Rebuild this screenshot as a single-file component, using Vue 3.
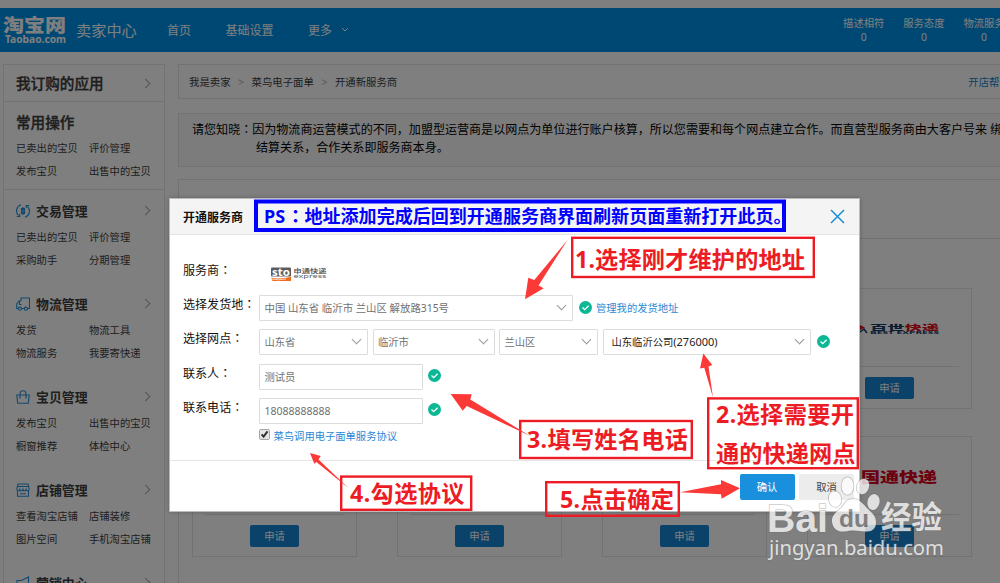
<template>
  <div class="page">
    <header class="topbar">
      <svg class="logo" width="70" height="44" viewBox="0 0 70 44">
        <text class="logo-cn" transform="translate(3 24) scale(1 0.86)" textLength="63">淘宝网</text>
        <text class="logo-en" x="5" y="35" textLength="61" lengthAdjust="spacingAndGlyphs">Taobao.com</text>
      </svg>
      <span class="center-name">卖家中心</span>
      <nav>
        <a>首页</a>
        <a>基础设置</a>
        <a>更多</a>
        <svg width="8" height="6" viewBox="0 0 8 6"><path d="M1 1l3 3 3-3" /></svg>
      </nav>
      <ul class="scores">
        <li v-for="score in scores" :key="score"><span>{{ score }}</span><span>0</span></li>
      </ul>
    </header>

    <div class="columns">
      <aside class="sidebar">
        <h2 class="apps">我订购的应用 <i class="more"></i></h2>
        <section class="common">
          <h2>常用操作</h2>
          <div class="links">
            <a v-for="link in commonLinks" :key="link">{{ link }}</a>
          </div>
        </section>
        <section v-for="group in groups" :key="group.title" class="group">
          <h3>
            <svg width="14" height="14" viewBox="0 0 14 14"><path v-for="d in group.icon" :key="d" :d="d" /></svg>
            {{ group.title }}
            <i class="more"></i>
          </h3>
          <div class="links">
            <a v-for="link in group.links" :key="link">{{ link }}</a>
          </div>
        </section>
      </aside>

      <main>
        <div class="crumbs">
          <span>我是卖家</span><b>&gt;</b><span>菜鸟电子面单</span><b>&gt;</b><span>开通新服务商</span>
          <a>开店帮助</a>
        </div>
        <div class="notice">
          <p>请您知晓<span class="colon">：</span>因为物流商运营模式的不同，加盟型运营商是以网点为单位进行账户核算，所以您需要和每个网点建立合作。而直营型服务商由大客户号来 绑定</p>
          <p class="second">结算关系，合作关系即服务商本身。</p>
        </div>
        <div class="panel">
          <div class="tabs"></div>
          <div class="cards">
            <div v-for="n in 8" :key="n" class="card">
              <div class="brand">
                <svg v-if="n === 4" width="139" height="76" viewBox="0 0 139 76">
                  <path d="M36 34l9 4.500-9 4.500z" fill="#e0101c" />
                  <path d="M40 43l4-3 3 4" fill="none" stroke="#163a66" stroke-width="1.5" />
                  <text class="best" transform="translate(50 40.500) scale(1 0.42)" textLength="69"><tspan fill="#163a66">百世</tspan><tspan fill="#e0101c">快递</tspan></text>
                  <text class="best-en" transform="translate(50 44.500) scale(1 0.55)" textLength="69" lengthAdjust="spacingAndGlyphs">BEST EXPRESS</text>
                </svg>
                <svg v-if="n === 8" width="139" height="76" viewBox="0 0 139 76">
                  <text class="gto" transform="translate(41 44.500) scale(1 0.74)" textLength="76">国通快递</text>
                </svg>
              </div>
              <button type="button">申请</button>
            </div>
          </div>
        </div>
      </main>
    </div>

    <div class="mask"></div>

    <div class="dialog">
      <div class="dialog-head">
        <strong>开通服务商</strong>
        <svg width="15" height="15" viewBox="0 0 15 15"><path d="M1 1l13 13M14 1L1 14" /></svg>
      </div>
      <div class="dialog-body">
        <div class="row">
          <label>服务商<span class="colon">：</span></label>
          <svg class="sto" width="60" height="20" viewBox="0 0 60 20">
            <rect x="0" y="3.500" width="20" height="9" rx="1" fill="#5c5c60" />
            <path d="M0 13.8q10 1.600 20-1v4.200H1.500z" fill="#f26b1d" />
            <path d="M0 15q8 1.600 15 0" fill="none" stroke="#fff" stroke-width="0.7" />
            <text class="sto-mark" x="1" y="11.500" textLength="18" lengthAdjust="spacingAndGlyphs">sto</text>
            <text class="sto-cn" transform="translate(22.500 9.300) scale(1 0.64)" textLength="33" lengthAdjust="spacingAndGlyphs">申通快递</text>
            <text class="sto-en" transform="translate(22.500 14) scale(1 0.72)" textLength="33" lengthAdjust="spacingAndGlyphs">express</text>
          </svg>
        </div>
        <div class="row">
          <label>选择发货地<span class="colon">：</span></label>
          <div class="field address">中国 山东省 临沂市 兰山区 解放路315号<i class="down"></i></div>
          <i class="ok"><svg width="13" height="13" viewBox="0 0 13 13"><path d="M3.500 6.500l2.200 2.200 3.900-3.900" /></svg></i>
          <a class="manage">管理我的发货地址</a>
        </div>
        <div class="row">
          <label>选择网点<span class="colon">：</span></label>
          <div class="field province">山东省<i class="down"></i></div>
          <div class="field city">临沂市<i class="down"></i></div>
          <div class="field district">兰山区<i class="down"></i></div>
          <div class="field branch">山东临沂公司<span>(276000)</span><i class="down thin"></i></div>
          <i class="ok"><svg width="13" height="13" viewBox="0 0 13 13"><path d="M3.500 6.500l2.200 2.200 3.900-3.900" /></svg></i>
        </div>
        <div class="row">
          <label>联系人<span class="colon">：</span></label>
          <div class="field text">测试员</div>
          <i class="ok wide"><svg width="13" height="13" viewBox="0 0 13 13"><path d="M3.500 6.500l2.200 2.200 3.900-3.900" /></svg></i>
        </div>
        <div class="row">
          <label>联系电话<span class="colon">：</span></label>
          <div class="field text phone">18088888888</div>
          <i class="ok wide"><svg width="13" height="13" viewBox="0 0 13 13"><path d="M3.500 6.500l2.200 2.200 3.900-3.900" /></svg></i>
        </div>
        <div class="agree">
          <svg width="11" height="11" viewBox="0 0 11 11">
            <rect x="0.5" y="0.5" width="10" height="10" rx="1.500" />
            <path d="M2.600 5.300l2 2.300 3.900-5.200" />
          </svg>
          <a>菜鸟调用电子面单服务协议</a>
        </div>
      </div>
      <div class="dialog-foot">
        <button type="button" class="confirm">确认</button>
        <button type="button" class="cancel">取消</button>
      </div>
    </div>

    <!-- hand-drawn tutorial notes over the dialog -->
    <svg class="notes" width="1000" height="583" viewBox="0 0 1000 583">
      <rect class="ps-box" x="256" y="201.500" width="528" height="28.500" />
      <text class="ps-text" x="264" y="223">PS</text>
      <text class="ps-text ps-colon" x="286.500" y="223">：</text>
      <text class="ps-text" x="304.500" y="223" textLength="487">地址添加完成后回到开通服务商界面刷新页面重新打开此页。</text>
      <rect v-for="box in boxes" :key="box.x" class="box" :x="box.x" :y="box.y" :width="box.w" :height="box.h" />
      <polygon v-for="points in arrows" :key="points" class="arrow" :points="points" />
      <text v-for="note in notes" :key="note.text" class="note" :x="note.x" :y="note.y" :textLength="note.w">{{ note.text }}</text>
    </svg>

    <svg class="watermark" width="190" height="100" viewBox="760 470 190 100">
      <g class="wm-shape">
        <ellipse cx="847.500" cy="486" rx="6" ry="8.800" />
        <ellipse cx="863" cy="486.500" rx="6" ry="8" transform="rotate(18 863 486.500)" />
        <ellipse cx="835" cy="499" rx="6.200" ry="8" transform="rotate(-12 835 499)" />
        <ellipse cx="873.500" cy="502" rx="6" ry="8" transform="rotate(12 873.500 502)" />
        <path d="M853 499c-7 0-8 5-12 9-6 5-9.500 8-9 14 1 7 6 10 12 9.500 4-.5 6-1 10-1s7 .8 11 1c7 .4 11-3 11-9.500 0-6-4-9-8-13-5-5-8-10-15-10z" />
      </g>
      <text class="wm-bai" x="767" y="531.500" textLength="61" lengthAdjust="spacingAndGlyphs">Bai</text>
      <text class="wm-du" x="839" y="527" textLength="30" lengthAdjust="spacingAndGlyphs">du</text>
      <text class="wm-cn" x="881" y="528" textLength="61">经验</text>
      <text class="wm-url" x="769" y="554.500" textLength="175" lengthAdjust="spacingAndGlyphs">jingyan.baidu.com</text>
    </svg>
  </div>
</template>

<script setup>
const scores = ["描述相符", "服务态度", "物流服务"];

const commonLinks = ["已卖出的宝贝", "评价管理", "发布宝贝", "出售中的宝贝"];

const groups = [
  {
    title: "交易管理",
    links: ["已卖出的宝贝", "评价管理", "采购助手", "分期管理"],
    icon: [
      "M5 .8a6.400 6.400 0 0 0-2.500 10.700M.8 12.500h3V10",
      "M9 13.200a6.400 6.400 0 0 0 2.500-10.700M13.200 1.500h-3V4",
      "M5.500 4.500h3v5h-3zM7 3v8M5 5.500h4M5 8h4",
    ],
  },
  {
    title: "物流管理",
    links: ["发货", "物流工具", "物流服务", "我要寄快递"],
    icon: [
      "M5 4V1h8.500v10.500H12M5 4H3L.7 7V11.500H2M3.500 4v3.500H5.500M6 11.500h2",
      "M2.300 11.700a1.600 1.600 0 1 0 3.200 0 1.600 1.600 0 1 0-3.200 0M8.300 11.700a1.600 1.600 0 1 0 3.200 0 1.600 1.600 0 1 0-3.200 0",
    ],
  },
  {
    title: "宝贝管理",
    links: ["发布宝贝", "出售中的宝贝", "橱窗推荐", "体检中心"],
    icon: [
      "M.8 5h12.400l-.9 8.300H1.700z",
      "M4 8V4.200C4 2 5.200.8 7 .8s3 1.200 3 3.400V8M3.300 8h1.400M9.300 8h1.400",
    ],
  },
  {
    title: "店铺管理",
    links: ["查看淘宝店铺", "店铺装修", "图片空间", "手机淘宝店铺"],
    icon: [
      "M2 1h10l1.200 5c0 2-2.600 2.300-3.100.5-.6 1.900-2.600 1.900-3.100 0-.6 1.900-2.600 1.900-3.100 0C3.400 8.300.8 8 .8 6z",
      "M1.500 8v5.300h11V8M2 3.500h10M4 10.700h6",
    ],
  },
  {
    title: "营销中心",
    links: [],
    icon: ["M1 4.500h4.500L12.500 1v11L6 9H1zM3 9v4h3V9"],
  },
];

const boxes = [
  { x: 572.2, y: 237.8, w: 241.6, h: 39.2 },
  { x: 708.2, y: 398.4, w: 149.6, h: 69.8 },
  { x: 520.2, y: 421, w: 171.6, h: 37 },
  { x: 341.2, y: 476.6, w: 130, h: 33.2 },
  { x: 546.2, y: 482.2, w: 132.6, h: 33.6 },
];

const notes = [
  { text: "1.选择刚才维护的地址", x: 575, y: 268, w: 230 },
  { text: "2.选择需要开", x: 716, y: 422.5, w: 138 },
  { text: "通的快递网点", x: 716, y: 462, w: 139.5 },
  { text: "3.填写姓名电话", x: 527, y: 448, w: 161 },
  { text: "4.勾选协议", x: 350, y: 501.5, w: 114.5 },
  { text: "5.点击确定", x: 560, y: 508, w: 114 },
];

const arrows = [
  "567.5,240 534.3,280 528.3,277.7 525,299.3 543.7,288.3 538.5,285.5",
  "703.3,353.5 700,368.5 704.3,367.7 713,397.5 708.5,366.5 712.3,365",
  "450.7,394 471.7,394.3 470.3,399.5 530,436 466.7,406 462.7,410.7",
  "310,453 320.7,456 318.5,459.5 348.7,488.3 316.4,462 314.3,463.7",
  "680,492.3 721,484.3 721,480 740,488.3 721.7,498.7 721,494.3",
];
</script>

<style>
body {
  overflow: hidden;
}
</style>

<style scoped>
.page {
  position: relative;
  width: 1000px;
  height: 583px;
  overflow: hidden;
  box-sizing: border-box;
  padding-top: 8px;
  background: #fff;
  color: #3c3c3c;
  font-family: "Noto Sans", "Noto Sans CJK SC", sans-serif;
  font-size: 10.3px;
}

.page *,
.page *::before {
  box-sizing: border-box;
}

h2,
h3,
p,
ul {
  margin: 0;
  padding: 0;
}

button {
  border: 0;
  padding: 0 0 1px;
  border-radius: 2px;
  font-family: inherit;
  font-size: 10.3px;
  color: #fff;
  background: #1a90dc;
}

/* the TC face centres the colon in its cell */
.colon {
  font-family: "Noto Sans CJK TC", sans-serif;
  line-height: 1;
}

.topbar {
  display: flex;
  align-items: center;
  height: 44px;
  background: #0090e8;
  color: #fff;
  white-space: nowrap;
}

.logo {
  flex: none;
  fill: #fff;
}

.logo-cn {
  font: 900 21px "Noto Sans CJK SC", sans-serif;
}

.logo-en {
  font: bold 10px "Noto Sans", sans-serif;
}

.center-name {
  flex: none;
  width: 97px;
  padding: 0 0 2px 6px;
  font-size: 15.2px;
}

nav {
  display: flex;
  flex: none;
  align-items: center;
  width: 666.6px;
  padding-bottom: 1px;
  font-size: 12px;
}

nav a {
  margin-right: 34.5px;
}

nav a:nth-child(3) {
  margin-right: 9px;
}

nav svg {
  fill: none;
  stroke: #fff;
}

.scores {
  display: flex;
  flex: none;
  list-style: none;
}

.scores li {
  display: flex;
  flex-direction: column;
  align-items: center;
  flex: none;
  width: 60.2px;
  line-height: 14px;
}

.columns {
  display: flex;
  padding: 12px 0 0 3px;
  gap: 13px;
}

.sidebar {
  flex: none;
  width: 162px;
  height: 530px;
  border: 1px solid #e4e4e4;
}

.apps {
  display: flex;
  align-items: center;
  justify-content: space-between;
  height: 37px;
  padding: 0 12px 0 12px;
  border-bottom: 1px solid #e4e4e4;
}

.sidebar h2 {
  font-size: 14.6px;
  font-weight: 500;
  line-height: 20px;
  -webkit-text-stroke: 0.35px #3c3c3c;
}

.common {
  height: 88px;
  padding: 10px 0 0 12px;
  border-bottom: 1px solid #e4e4e4;
}

.links {
  display: grid;
  grid-template-columns: 73px 72px;
  grid-auto-rows: 23.3px;
  line-height: 23.3px;
  white-space: nowrap;
}

.common .links {
  margin-top: 5px;
}

.group {
  height: 93px;
  padding: 10px 0 0 12px;
}

.group h3 {
  display: flex;
  align-items: center;
  height: 21px;
  padding-right: 12px;
  font-size: 12.9px;
  font-weight: bold;
}

.group h3 svg {
  margin-right: 6px;
  fill: none;
  stroke: #2490dc;
  stroke-width: 1.1;
}

.group .links {
  margin-top: 5px;
}

.more {
  width: 7px;
  height: 7px;
  margin-left: auto;
  margin-right: 3px;
  border: 1px solid #aaa;
  border-width: 1px 1px 0 0;
  transform: rotate(45deg);
}

main {
  flex: none;
  width: 840px;
}

.crumbs {
  display: flex;
  align-items: center;
  height: 35px;
  padding-left: 10px;
  border: 1px solid #e4e4e4;
  font-size: 10.4px;
}

.crumbs b {
  width: 21px;
  text-align: center;
  font-weight: normal;
  color: #aaa;
}

.crumbs a {
  margin-left: 571px;
  color: #2080c8;
}

.notice {
  height: 54px;
  margin-top: 14px;
  padding: 7px 0 0 13px;
  border: 1px solid #e4e4e4;
  background: #f9f9f9;
  color: #000;
  font-size: 12.05px;
  line-height: 18.3px;
  white-space: nowrap;
}

.second {
  padding-left: 64px;
}

.panel {
  height: 440px;
  margin-top: 12px;
  border: 1px solid #e4e4e4;
}

.tabs {
  height: 59px;
  border-bottom: 1px solid #e4e4e4;
}

.cards {
  display: grid;
  grid-template-columns: repeat(4, 165px);
  gap: 27px 40px;
  padding: 49px 0 0 13px;
}

.card {
  display: flex;
  flex-direction: column;
  align-items: center;
  height: 121px;
  border: 1px solid #e4e4e4;
}

.brand {
  width: 139px;
  height: 78px;
  border-bottom: 1px solid #e4e4e4;
}

.card button {
  width: 48.5px;
  height: 22px;
  margin-top: 10px;
  background: #1684d2;
}

.best {
  font: 900 17.3px "Noto Sans CJK SC", sans-serif;
}

.best-en {
  font: bold 6px "Noto Sans", sans-serif;
  fill: #163a66;
}

.gto {
  font: 900 19px "Noto Sans CJK SC", sans-serif;
  fill: #d8001e;
}

.mask {
  position: absolute;
  inset: 0;
  background: rgba(0, 0, 0, 0.5);
}

.dialog {
  position: absolute;
  left: 169px;
  top: 198px;
  width: 691px;
  height: 314px;
  border: 1px solid #bbb;
  background: #fff;
  box-shadow: 0 0 4px rgba(0, 0, 0, 0.25);
  color: #111;
}

.dialog-head {
  display: flex;
  align-items: center;
  justify-content: space-between;
  height: 36px;
  padding: 0 14px 0 13px;
  border-bottom: 1px solid #e6e6e6;
  background: #f4f4f4;
  font-size: 12px;
}

.dialog-head svg {
  fill: none;
  stroke: #1a8cd8;
  stroke-width: 1.5;
}

.dialog-body {
  height: 225px;
  padding: 21.6px 0 0 13px;
}

.row {
  display: flex;
  align-items: center;
  height: 34.3px;
}

.row label {
  flex: none;
  width: 76px;
  padding-bottom: 8px;
  font-size: 12.05px;
}

.sto {
  margin-left: 12px;
}

.sto-mark {
  font: bold 10px "Noto Sans", sans-serif;
  fill: #fff;
}

.sto-cn {
  font: bold 8.3px "Noto Sans CJK SC", sans-serif;
  fill: #5c5c60;
}

.sto-en {
  font: 8px "Noto Sans", sans-serif;
  fill: #5c5c60;
}

.field {
  display: flex;
  align-items: center;
  flex: none;
  height: 26px;
  margin-right: 4.5px;
  padding: 0 6px 1px 4.5px;
  border: 1px solid #dcdcdc;
  border-radius: 1px;
  color: #707070;
  white-space: pre;
}

.address {
  width: 314px;
  margin-right: 6px;
  font-size: 10.4px;
}

.province {
  width: 109px;
}

.city {
  width: 122px;
}

.district {
  width: 99px;
}

.branch {
  width: 208.5px;
  margin-right: 5.5px;
  padding-left: 8px;
  color: #222;
}

.branch span {
  font-size: 11px;
}

.text {
  width: 163.5px;
}

.phone {
  padding-bottom: 0;
  font-size: 10.5px;
}

.down {
  width: 7px;
  height: 7px;
  margin: -4px 1px 0 auto;
  border: 1.5px solid #999;
  border-width: 0 1.5px 1.5px 0;
  transform: rotate(45deg);
}

.thin {
  border-width: 0 1px 1px 0;
}

.ok {
  flex: none;
  width: 13px;
  height: 13px;
  margin-top: -2px;
  border-radius: 50%;
  background: #0bb794;
}

.ok.wide {
  margin-left: 1px;
}

.ok svg {
  display: block;
  fill: none;
  stroke: #fff;
  stroke-width: 1.3;
}

.manage,
.agree a {
  color: #2a88d4;
}

.manage {
  margin-left: 4px;
  padding-bottom: 2px;
}

.agree {
  display: flex;
  align-items: center;
  height: 15px;
  padding-left: 76px;
}

.agree svg {
  margin: -2px 3.5px 0 0;
}

.agree rect {
  fill: #e6e6e6;
  stroke: #a8a8a8;
}

.agree path {
  fill: none;
  stroke: #333;
  stroke-width: 2;
}

.dialog-foot {
  display: flex;
  justify-content: flex-end;
  gap: 4.5px;
  height: 51px;
  padding: 13px 5px 0 0;
  border-top: 1px solid #e6e6e6;
}

.dialog-foot button {
  width: 55px;
  height: 26px;
}

.confirm {
  background: #1a90dc;
}

.dialog-foot .cancel {
  background: #ececec;
  color: #444;
}

.notes {
  position: absolute;
  left: 0;
  top: 0;
}

.ps-box {
  fill: none;
  stroke: #00f;
  stroke-width: 4;
}

.ps-text {
  font: bold 18.05px "Noto Sans", "Noto Sans CJK SC", sans-serif;
  fill: #00f;
}

.ps-colon {
  font-family: "Noto Sans CJK TC", sans-serif;
}

.box {
  fill: none;
  stroke: #ed1c24;
  stroke-width: 2.4;
}

.note {
  font: bold 23.2px "Noto Sans", "Noto Sans CJK SC", sans-serif;
  fill: #ed1c24;
}

.arrow {
  fill: #fb3a38;
}

.watermark {
  position: absolute;
  left: 760px;
  top: 470px;
  fill: #fff;
  opacity: 0.75;
  stroke: rgba(110, 110, 110, 0.5);
  stroke-width: 1.5;
  paint-order: stroke;
}

.wm-bai {
  font: bold 39px "Liberation Sans", sans-serif;
}

.wm-du {
  font: bold 23px "Liberation Sans", sans-serif;
  fill: #808080;
  stroke: none;
}

.wm-cn {
  font: bold 30.5px "Noto Sans CJK SC", sans-serif;
}

.wm-url {
  font: 20px "Noto Sans", sans-serif;
}
</style>
